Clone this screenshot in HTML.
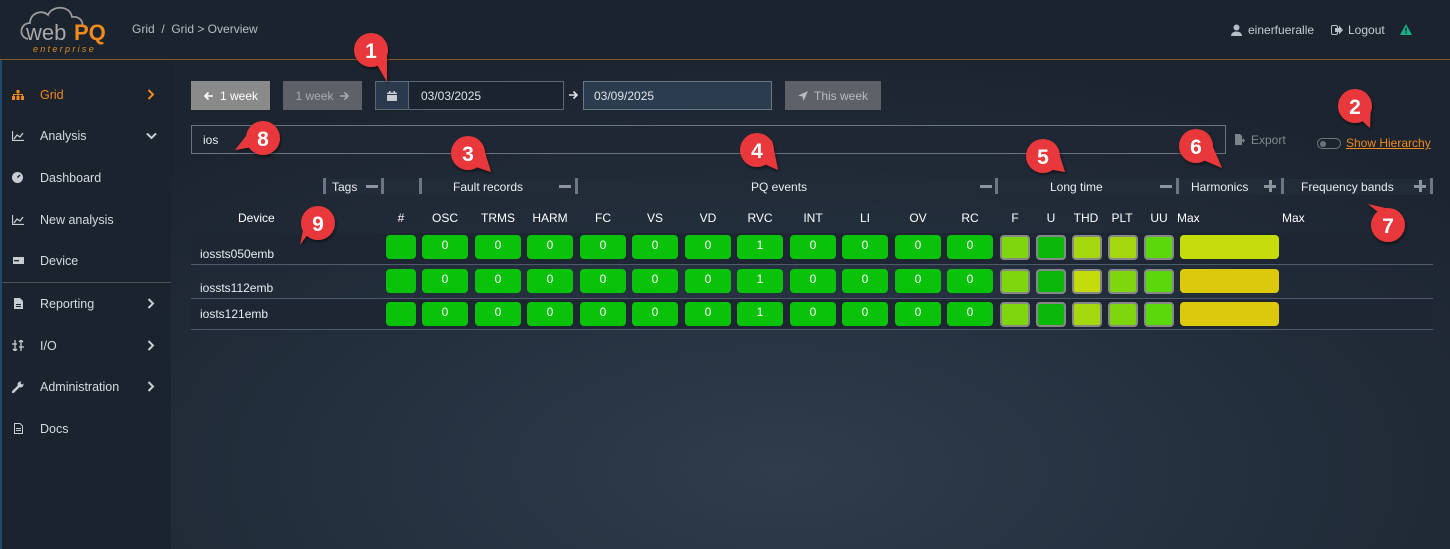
<!DOCTYPE html>
<html><head><meta charset="utf-8"><style>
*{box-sizing:border-box;margin:0;padding:0}
body{width:1450px;height:549px;overflow:hidden;font-family:"Liberation Sans",sans-serif;font-size:12px;color:#e8ecf0;position:relative;
background:radial-gradient(ellipse 900px 420px at 780px 470px,#2e3c4c 0%,#25313f 45%,#1c242f 100%);}
.a{position:absolute;white-space:nowrap}
.top{position:absolute;left:0;top:0;width:1450px;height:60px;background:#1b232e;border-bottom:1px solid #8a5a24}
.side{position:absolute;left:0;top:60px;width:171px;height:489px;background:#1b232e;border-left:2px solid #1f4a6e}
.nav{position:absolute;left:40px;font-size:12.5px;color:#d6dbe0}
.chev{position:absolute;left:147px}
.btn{position:absolute;top:81px;height:29px;font-size:12px;display:flex;align-items:center;justify-content:center}
.c{position:absolute;height:24px;width:46px;background:#0ac20a;border-radius:4px;color:#fff;text-align:center;font-size:12px;line-height:20px}
.s{position:absolute;height:25px;width:30px;border:2px solid #888;border-radius:4px}
.h{position:absolute;top:211px;font-size:12px;color:#fff;text-align:center}
.gh{position:absolute;top:179px;height:16px;background:#222c39}
.bar{position:absolute;top:178px;width:3px;height:16px;background:#6d7682}
.mi{position:absolute;top:185px;width:12px;height:3px;background:#8d949c}
.pl{position:absolute;top:180px;width:12px;height:12px}
.pl:before{content:"";position:absolute;left:0;top:4.5px;width:12px;height:3px;background:#8d949c}
.pl:after{content:"";position:absolute;left:4.5px;top:0;width:3px;height:12px;background:#8d949c}
.sep{position:absolute;left:191px;width:1242px;height:1px;background:#4f5c6a}
</style></head><body>
<div class="top"></div>
<!-- logo -->
<svg class="a" style="left:18px;top:3px" width="100" height="52" viewBox="0 0 100 52">
<path d="M10 36 C0 34 2 20 12 20 C12 10 24 6 30 12 C34 2 52 2 54 14 C61 13 66 18 64 24" fill="none" stroke="#9a9a9a" stroke-width="1.8"/>
<text x="8" y="37" font-family="Liberation Sans" font-size="22" fill="#a8a8a8">web</text>
<text x="56" y="37" font-family="Liberation Sans" font-size="22" font-weight="bold" fill="#f08a1c">PQ</text>
<text x="15" y="49" font-family="Liberation Sans" font-size="9" font-style="italic" letter-spacing="2.3" fill="#e08a1c">enterprise</text>
</svg>
<div class="a" style="left:132px;top:22px;color:#b8bec5;font-size:12px">Grid&nbsp; / &nbsp;Grid &gt; Overview</div>
<svg class="a" style="left:1231px;top:24px" width="11" height="12"><circle cx="5.5" cy="3.5" r="3" fill="#b8bec5"/><path d="M0 12 C0 6 11 6 11 12Z" fill="#b8bec5"/></svg>
<div class="a" style="left:1248px;top:23px;color:#c8cdd2">einerfueralle</div>
<svg class="a" style="left:1331px;top:25px" width="12" height="10"><rect x="0.5" y="0.5" width="6" height="9" rx="1.5" fill="none" stroke="#b8bec5"/><path d="M4 3h4V0.5L12 5 8 9.5V7H4z" fill="#b8bec5"/></svg>
<div class="a" style="left:1348px;top:23px;color:#c8cdd2">Logout</div>
<svg class="a" style="left:1400px;top:24px" width="12" height="11"><path d="M6 0L12 11H0Z" fill="#17b28a"/><rect x="5.3" y="3.5" width="1.4" height="4" fill="#1b232e"/><rect x="5.3" y="8.3" width="1.4" height="1.4" fill="#1b232e"/></svg>

<div class="side"></div>
<svg class="a" style="left:12px;top:90px" width="12" height="10"><rect x="4.5" y="0" width="3" height="3" fill="#f08a1c"/><rect x="0" y="6" width="3" height="4" fill="#f08a1c"/><rect x="4.5" y="6" width="3" height="4" fill="#f08a1c"/><rect x="9" y="6" width="3" height="4" fill="#f08a1c"/><path d="M1.5 6V4.5h9V6M6 3v3" stroke="#f08a1c" fill="none"/></svg>
<div class="nav" style="top:88px;color:#f08a1c">Grid</div>
<svg class="chev" style="top:89px" width="8" height="11"><path d="M1.5 1l4.5 4.5-4.5 4.5" stroke="#f08a1c" stroke-width="2" fill="none"/></svg>
<svg class="a" style="left:12px;top:131px" width="12" height="10"><path d="M0.5 0v9.5H12M2 8l3-4 3 2 3-4" stroke="#c8cdd2" fill="none" stroke-width="1.3"/></svg>
<div class="nav" style="top:129px">Analysis</div>
<svg class="chev" style="top:132px;left:146px" width="11" height="8"><path d="M1 1.5l4.5 4.5 4.5-4.5" stroke="#c8cdd2" stroke-width="2" fill="none"/></svg>
<svg class="a" style="left:12px;top:172px" width="11" height="11"><circle cx="5.5" cy="5.5" r="5.5" fill="#c8cdd2"/><path d="M5.5 5.5L8 3" stroke="#1b232e" stroke-width="1.5"/></svg>
<div class="nav" style="top:171px">Dashboard</div>
<svg class="a" style="left:12px;top:215px" width="12" height="10"><path d="M0.5 0v9.5H12M2 8l3-4 3 2 3-4" stroke="#c8cdd2" fill="none" stroke-width="1.3"/></svg>
<div class="nav" style="top:213px">New analysis</div>
<svg class="a" style="left:13px;top:257px" width="11" height="7"><rect width="11" height="7" fill="#c8cdd2"/><rect x="1" y="3" width="5" height="1.3" fill="#1b232e"/></svg>
<div class="nav" style="top:254px">Device</div>
<div class="a" style="left:2px;top:282px;width:169px;height:1px;background:#4b525a"></div>
<svg class="a" style="left:14px;top:298px" width="9" height="11"><path d="M0 0h6l3 3v8H0z" fill="#c8cdd2"/><rect x="2" y="6" width="5" height="1" fill="#1b232e"/><rect x="2" y="8" width="5" height="1" fill="#1b232e"/></svg>
<div class="nav" style="top:297px">Reporting</div>
<svg class="chev" style="top:298px" width="8" height="11"><path d="M1.5 1l4.5 4.5-4.5 4.5" stroke="#c8cdd2" stroke-width="2" fill="none"/></svg>
<svg class="a" style="left:12px;top:340px" width="12" height="11"><path d="M3 0v11M1 9l2 2 2-2M9 11V0M7 2l2-2 2 2M0 4h5M7 7h5" stroke="#c8cdd2" stroke-width="1.3" fill="none"/></svg>
<div class="nav" style="top:339px">I/O</div>
<svg class="chev" style="top:340px" width="8" height="11"><path d="M1.5 1l4.5 4.5-4.5 4.5" stroke="#c8cdd2" stroke-width="2" fill="none"/></svg>
<svg class="a" style="left:12px;top:381px" width="12" height="12"><path d="M1 11L7 5" stroke="#c8cdd2" stroke-width="2.5" stroke-linecap="round"/><circle cx="8.5" cy="3.5" r="3" fill="#c8cdd2"/><circle cx="10" cy="2" r="1.3" fill="#1b232e"/></svg>
<div class="nav" style="top:380px">Administration</div>
<svg class="chev" style="top:381px" width="8" height="11"><path d="M1.5 1l4.5 4.5-4.5 4.5" stroke="#c8cdd2" stroke-width="2" fill="none"/></svg>
<svg class="a" style="left:14px;top:423px" width="9" height="11"><path d="M0.5 0.5h5.5l2.5 2.5v7.5h-8z" fill="none" stroke="#c8cdd2"/><rect x="2" y="5" width="5" height="1" fill="#c8cdd2"/><rect x="2" y="7" width="5" height="1" fill="#c8cdd2"/></svg>
<div class="nav" style="top:422px">Docs</div>

<!-- toolbar -->
<div class="btn" style="left:191px;width:79px;background:#8a8a8a;color:#fff"><svg width="11" height="10" style="margin-right:6px"><path d="M10 5H2M5.5 1.5L2 5l3.5 3.5" stroke="#fff" stroke-width="1.6" fill="none"/></svg>1 week</div>
<div class="btn" style="left:283px;width:79px;background:#5e6167;color:#a8abb0">1 week<svg width="11" height="10" style="margin-left:5px"><path d="M1 5h8M5.5 1.5L9 5l-3.5 3.5" stroke="#a8abb0" stroke-width="1.6" fill="none"/></svg></div>
<div class="btn" style="left:375px;width:34px;background:#2a3a4c;border:1px solid #5a6876"><svg width="10" height="10"><rect y="1.5" width="10" height="8.5" rx="1" fill="#c8cdd2"/><rect x="2" y="0" width="1.5" height="3" fill="#c8cdd2"/><rect x="6.5" y="0" width="1.5" height="3" fill="#c8cdd2"/><rect y="3" width="10" height="1" fill="#2a3a4c"/></svg></div>
<div class="btn" style="left:408px;width:156px;border:1px solid #5a6876;background:#1b232e;justify-content:flex-start;padding-left:12px;color:#dfe3e7">03/03/2025</div>
<svg class="a" style="left:568px;top:90px" width="11" height="10"><path d="M1 5h8M5.5 1.5L9 5l-3.5 3.5" stroke="#dfe3e7" stroke-width="1.6" fill="none"/></svg>
<div class="btn" style="left:583px;width:189px;border:1px solid #6a7886;background:#2b3c4f;justify-content:flex-start;padding-left:10px;color:#dfe3e7">03/09/2025</div>
<div class="btn" style="left:785px;width:96px;background:#5e6167;color:#b8bbc0"><svg width="10" height="10" style="margin-right:6px"><path d="M10 0L0 4.5l4.5 1 1 4.5z" fill="#b8bbc0"/></svg>This week</div>
<div class="a" style="left:191px;top:125px;width:1035px;height:29px;border:1px solid #6a7480;background:#1e2733"></div>
<div class="a" style="left:203px;top:133px;color:#e8ecf0">ios</div>
<svg class="a" style="left:1235px;top:134px" width="10" height="11"><path d="M0 0h5l2 2v9H0z" fill="#7d848c"/><path d="M6 5.5h2V4l2 2.5-2 2.5V7.5H6z" fill="#7d848c"/></svg>
<div class="a" style="left:1251px;top:133px;color:#80878f">Export</div>
<div class="a" style="left:1317px;top:138px;width:24px;height:11px;border:1px solid #6a727a;border-radius:6px"></div>
<div class="a" style="left:1320px;top:141px;width:6px;height:6px;border-radius:3px;background:#6a727a"></div>
<div class="a" style="left:1346px;top:136px;color:#f08a1c;text-decoration:underline">Show Hierarchy</div>

<!-- group headers -->
<div class="gh" style="left:324px;width:1108px"></div>
<div class="bar" style="left:323px"></div><div class="a" style="left:332px;top:180px">Tags</div><div class="mi" style="left:366px"></div><div class="bar" style="left:381px"></div>
<div class="bar" style="left:419px"></div><div class="a" style="left:453px;top:180px">Fault records</div><div class="mi" style="left:559px"></div><div class="bar" style="left:575px"></div>
<div class="a" style="left:751px;top:180px">PQ events</div><div class="mi" style="left:980px"></div><div class="bar" style="left:995px"></div>
<div class="a" style="left:1050px;top:180px">Long time</div><div class="mi" style="left:1160px"></div><div class="bar" style="left:1176px"></div>
<div class="a" style="left:1191px;top:180px">Harmonics</div><div class="pl" style="left:1264px"></div><div class="bar" style="left:1281px"></div>
<div class="a" style="left:1301px;top:180px">Frequency bands</div><div class="pl" style="left:1414px"></div><div class="bar" style="left:1430px"></div>

<!-- column headers -->
<div class="h" style="left:238px">Device</div>
<div class="h" style="left:386px;width:30px">#</div>
<div class="h" style="left:422px;width:46px">OSC</div>
<div class="h" style="left:475px;width:46px">TRMS</div>
<div class="h" style="left:527px;width:46px">HARM</div>
<div class="h" style="left:580px;width:46px">FC</div>
<div class="h" style="left:632px;width:46px">VS</div>
<div class="h" style="left:685px;width:46px">VD</div>
<div class="h" style="left:737px;width:46px">RVC</div>
<div class="h" style="left:790px;width:46px">INT</div>
<div class="h" style="left:842px;width:46px">LI</div>
<div class="h" style="left:895px;width:46px">OV</div>
<div class="h" style="left:947px;width:46px">RC</div>
<div class="h" style="left:1000px;width:30px">F</div>
<div class="h" style="left:1036px;width:30px">U</div>
<div class="h" style="left:1070px;width:32px">THD</div>
<div class="h" style="left:1106px;width:32px">PLT</div>
<div class="h" style="left:1144px;width:30px">UU</div>
<div class="h" style="left:1177px">Max</div>
<div class="h" style="left:1282px">Max</div>

<div class="a" style="left:191px;top:233px;width:1242px;height:31px;background:#1d2632"></div>
<div class="a" style="left:191px;top:299px;width:1242px;height:30px;background:#1d2632"></div>
<div class="sep" style="top:264px"></div><div class="sep" style="top:298px"></div><div class="sep" style="top:329px"></div>
<div class="a" style="left:200px;top:247px">iossts050emb</div>
<div class="a" style="left:200px;top:281px">iossts112emb</div>
<div class="a" style="left:200px;top:307px">iosts121emb</div>

<div id="rows"></div>
<script>
var ys=[235,269,302],xs=[422,475,527,580,632,685,737,790,842,895,947],h='';
var sc=[["#7ed60e","#0ab80a","#a4d80c","#a4d80c","#5ad80c","#c6dc0c"],["#7ed60e","#0ab80a","#c4dc0c","#7ed60e","#5ad80c","#dcc80c"],["#7ed60e","#0ab80a","#a4d80c","#7ed60e","#5ad80c","#dcc80c"]];
var sx=[1000,1036,1072,1108,1144];
ys.forEach(function(y,r){
h+='<div class="c" style="left:386px;top:'+y+'px;width:30px"></div>';
xs.forEach(function(x,i){h+='<div class="c" style="left:'+x+'px;top:'+y+'px">'+(i==6?1:0)+'</div>';});
sx.forEach(function(x,i){h+='<div class="s" style="left:'+x+'px;top:'+y+'px;background:'+sc[r][i]+'"></div>';});
h+='<div class="c" style="left:1180px;top:'+y+'px;width:99px;background:'+sc[r][5]+'"></div>';
});
document.getElementById('rows').innerHTML=h;
</script>

<!-- markers -->
<svg width="1450" height="549" style="position:absolute;left:0;top:0;pointer-events:none" font-family="Liberation Sans" font-weight="bold" font-size="21" fill="#fff" text-anchor="middle">
<defs><filter id="sh"><feDropShadow dx="1" dy="2" stdDeviation="1.5" flood-color="#000" flood-opacity="0.5"/></filter></defs>
<g filter="url(#sh)" fill="#e8393b">
<circle cx="371" cy="50" r="17"/><path d="M376 63L387 82L387 53Z"/>
<circle cx="1355" cy="106" r="17"/><path d="M1360 119L1370 128L1371 103Z"/>
<circle cx="468" cy="153" r="17"/><path d="M473 166L491 172L483 146Z"/>
<circle cx="757" cy="150" r="17"/><path d="M762 163L778 170L772 140Z"/>
<circle cx="1043" cy="156" r="17"/><path d="M1048 169L1065 172L1058 150Z"/>
<circle cx="1196" cy="146" r="17"/><path d="M1201 159L1222 168L1210 140Z"/>
<circle cx="1388" cy="225" r="17"/><path d="M1378 212L1368 204L1394 210Z"/>
<circle cx="263" cy="138" r="17"/><path d="M252 147L235 150L254 126Z"/>
<circle cx="318" cy="223" r="17"/><path d="M308 234L300 245L306 216Z"/>
</g>
<g>
<text x="371" y="58">1</text><text x="1355" y="114">2</text><text x="468" y="161">3</text>
<text x="757" y="158">4</text><text x="1043" y="164">5</text><text x="1196" y="154">6</text>
<text x="1388" y="233">7</text><text x="263" y="146">8</text><text x="318" y="231">9</text>
</g>
</svg>
</body></html>
